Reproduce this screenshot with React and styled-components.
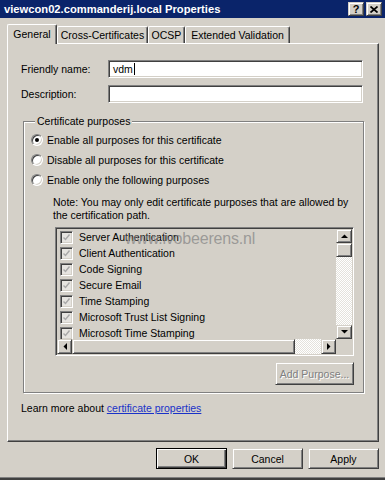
import React from 'react';
import styled, { createGlobalStyle } from 'styled-components';

const FACE = '#d4d0c8';

const GlobalStyle = createGlobalStyle`
  html, body { margin: 0; padding: 0; background: ${FACE}; }
  body {
    font-family: "Liberation Sans", Arial, sans-serif;
    font-size: 10.5px;
    color: #000;
  }
  #root { width: 385px; height: 480px; overflow: hidden; }
`;

const Window = styled.div`
  width: 385px;
  height: 480px;
  box-sizing: border-box;
  background: ${FACE};
  display: flex;
  flex-direction: column;
  border-bottom: 2px solid #404040;
  box-shadow: inset 0 -1px 0 #808080;
`;

const TitleBar = styled.div`
  height: 18px;
  flex: none;
  background: #0a246a;
  display: flex;
  align-items: center;
  padding: 0 3px 0 4px;
  color: #fff;
  font-weight: bold;
  font-size: 11.2px;
`;

const TitleText = styled.span`
  flex: 1;
  white-space: nowrap;
`;

const TitleButtons = styled.div`
  display: flex;
  gap: 2px;
`;

const raised = `
  border: 1px solid;
  border-color: ${FACE} #404040 #404040 ${FACE};
  box-shadow: inset 1px 1px 0 #fff, inset -1px -1px 0 #808080;
  background: ${FACE};
  box-sizing: border-box;
`;

const sunken = `
  border: 1px solid;
  border-color: #808080 #fff #fff #808080;
  box-shadow: inset 1px 1px 0 #404040, inset -1px -1px 0 ${FACE};
  box-sizing: border-box;
`;

const CaptionButton = styled.div`
  ${raised}
  width: 16px;
  height: 14px;
  display: flex;
  align-items: center;
  justify-content: center;
  color: #000;
  font-size: 11px;
  font-weight: bold;
  line-height: 1;
`;

const Body = styled.div`
  flex: 1;
  display: flex;
  flex-direction: column;
  padding: 6px 6px 0 7px;
  border-left: 1px solid #fff;
  margin-left: -1px;
`;

const TabRow = styled.div`
  display: flex;
  align-items: flex-end;
  height: 19px;
  position: relative;
  z-index: 1;
`;

const Tab = styled.div`
  width: ${p => p.$w}px;
  height: ${p => (p.$active ? 20 : 17)}px;
  margin-bottom: ${p => (p.$active ? -1 : 0)}px;
  box-sizing: border-box;
  background: ${FACE};
  border-top: 1px solid #fff;
  border-left: 1px solid #fff;
  border-right: 1px solid #404040;
  box-shadow: inset -1px 0 0 #808080;
  border-radius: 2px 2px 0 0;
  display: flex;
  align-items: center;
  justify-content: center;
  padding-bottom: ${p => (p.$active ? 2 : 0)}px;
  white-space: nowrap;
`;

const Panel = styled.div`
  flex: 1;
  box-sizing: border-box;
  border: 1px solid;
  border-color: #fff #404040 #404040 #fff;
  box-shadow: inset -1px -1px 0 #808080;
  padding: 16px 15px 0 13px;
  display: flex;
  flex-direction: column;
`;

const FieldRow = styled.div`
  display: grid;
  grid-template-columns: 87px 1fr;
  align-items: center;
  height: 18px;
  margin-bottom: 7px;
`;

const TextBox = styled.div`
  ${sunken}
  height: 18px;
  background: #fff;
  padding: 0 4px;
  display: flex;
  align-items: center;
`;

const Caret = styled.span`
  display: inline-block;
  width: 1px;
  height: 12px;
  background: #000;
  margin-left: 1px;
`;

const Group = styled.fieldset`
  margin: 5px -1px 0 2px;
  padding: 2px 9px 7px 7px;
  min-width: 0;
  border: 1px solid #808080;
  box-shadow: inset 1px 1px 0 #fff, 1px 1px 0 #fff;
  display: flex;
  flex-direction: column;
`;

const Legend = styled.legend`
  margin-left: 4px;
  padding: 0 2px;
  background: ${FACE};
  line-height: 13px;
`;

const RadioRow = styled.div`
  height: 20px;
  display: flex;
  align-items: center;
  gap: 4px;
`;

const RadioCircle = styled.span`
  width: 12px;
  height: 12px;
  box-sizing: border-box;
  border-radius: 50%;
  border: 1px solid;
  border-color: #808080 #fff #fff #808080;
  box-shadow: inset 1px 1px 0 #404040, inset -1px -1px 0 ${FACE};
  background: #fff;
  display: flex;
  align-items: center;
  justify-content: center;
  &::after {
    content: '';
    width: 4px;
    height: 4px;
    border-radius: 50%;
    background: ${p => (p.$checked ? '#000' : 'transparent')};
  }
`;

const Note = styled.div`
  margin: 6px 0 0 22px;
  line-height: 13px;
`;

const ListBox = styled.div`
  ${sunken}
  position: relative;
  margin: 5px 0 0 24px;
  height: 129px;
  padding: 1px;
  display: grid;
  grid-template-columns: 1fr 16px;
  grid-template-rows: 1fr 15px;
  background: ${FACE};
  overflow: hidden;
`;

const Items = styled.div`
  overflow: hidden;
`;

const Item = styled.div`
  height: 16px;
  display: flex;
  align-items: center;
  gap: 6px;
  padding-left: 3px;
  white-space: nowrap;
`;

const CheckBox = styled.span`
  ${sunken}
  width: 13px;
  height: 13px;
  background: #e6e4e0;
  display: flex;
  align-items: center;
  justify-content: center;
`;

const VScroll = styled.div`
  display: flex;
  flex-direction: column;
`;

const HScroll = styled.div`
  display: flex;
`;

const ScrollBtn = styled.div`
  ${raised}
  flex: none;
  width: ${p => p.$w || 16}px;
  height: ${p => p.$h || 15}px;
  display: flex;
  align-items: center;
  justify-content: center;
`;

const Thumb = styled.div`
  ${raised}
  flex: ${p => (p.$grow ? 1 : 'none')};
  height: ${p => (p.$h ? `${p.$h}px` : 'auto')};
`;

const Track = styled.div`
  flex: ${p => (p.$grow ? 1 : 'none')};
  width: ${p => (p.$w ? `${p.$w}px` : 'auto')};
  background: repeating-conic-gradient(#fff 0 25%, #e4e2dc 0 50%) 0 0 / 2px 2px;
`;

const Corner = styled.div`
  background: ${FACE};
`;

const Watermark = styled.div`
  position: absolute;
  left: 69px;
  top: 2px;
  font-size: 16px;
  color: rgba(135, 135, 135, 0.75);
  pointer-events: none;
  white-space: nowrap;
  letter-spacing: -0.2px;
`;

const AddButton = styled.div`
  ${raised}
  align-self: flex-end;
  margin-top: 6px;
  width: 79px;
  height: 23px;
  display: flex;
  align-items: center;
  justify-content: center;
  color: #808080;
  text-shadow: 1px 1px 0 #fff;
`;

const LearnMore = styled.div`
  margin: 9px 0 0 0;
  line-height: 13px;
`;

const Link = styled.span`
  color: #1a32c8;
  text-decoration: underline;
`;

const ButtonRow = styled.div`
  display: flex;
  justify-content: flex-end;
  gap: 5px;
  margin-top: 6px;
  padding: 0 0 9px 0;
`;

const DlgButton = styled.div`
  ${raised}
  width: 71px;
  height: 21px;
  display: flex;
  align-items: center;
  justify-content: center;
  ${p =>
    p.$default &&
    `
    border-color: #000;
    box-shadow: inset 1px 1px 0 #fff, inset -1px -1px 0 #404040, inset -2px -2px 0 #808080;
  `}
`;

const Arrow = ({ dir }) => {
  const pts = {
    up: '0,4 7,4 3.5,0.5',
    down: '0,0 7,0 3.5,3.5',
    left: '4,0 4,7 0.5,3.5',
    right: '0,0 0,7 3.5,3.5',
  }[dir];
  const horiz = dir === 'left' || dir === 'right';
  return (
    <svg width={horiz ? 4 : 7} height={horiz ? 7 : 4} viewBox={horiz ? '0 0 4 7' : '0 0 7 4'}>
      <polygon points={pts} fill="#000" />
    </svg>
  );
};

const Check = () => (
  <svg width="9" height="9" viewBox="0 0 9 9">
    <path d="M1.5 4.5 L3.5 6.5 L7.5 1.5" fill="none" stroke="#a8a8a8" strokeWidth="1.4" />
  </svg>
);

const purposes = [
  'Server Authentication',
  'Client Authentication',
  'Code Signing',
  'Secure Email',
  'Time Stamping',
  'Microsoft Trust List Signing',
  'Microsoft Time Stamping',
];

export default function App() {
  return (
    <>
      <GlobalStyle />
      <Window>
        <TitleBar>
          <TitleText>viewcon02.commanderij.local Properties</TitleText>
          <TitleButtons>
            <CaptionButton>?</CaptionButton>
            <CaptionButton>
              <svg width="8" height="7" viewBox="0 0 8 7">
                <path d="M0.5 0.5L7.5 6.5M7.5 0.5L0.5 6.5" stroke="#000" strokeWidth="1.7" />
              </svg>
            </CaptionButton>
          </TitleButtons>
        </TitleBar>
        <Body>
          <TabRow>
            <Tab $w={50} $active>General</Tab>
            <Tab $w={91}>Cross-Certificates</Tab>
            <Tab $w={37}>OCSP</Tab>
            <Tab $w={105}>Extended Validation</Tab>
          </TabRow>
          <Panel>
            <FieldRow>
              <span>Friendly name:</span>
              <TextBox>
                vdm<Caret />
              </TextBox>
            </FieldRow>
            <FieldRow>
              <span>Description:</span>
              <TextBox />
            </FieldRow>
            <Group>
              <Legend>Certificate purposes</Legend>
              <RadioRow>
                <RadioCircle $checked />
                <span>Enable all purposes for this certificate</span>
              </RadioRow>
              <RadioRow>
                <RadioCircle />
                <span>Disable all purposes for this certificate</span>
              </RadioRow>
              <RadioRow>
                <RadioCircle />
                <span>Enable only the following purposes</span>
              </RadioRow>
              <Note>
                Note: You may only edit certificate purposes that are allowed by
                <br />
                the certification path.
              </Note>
              <ListBox>
                <Items>
                  {purposes.map(p => (
                    <Item key={p}>
                      <CheckBox>
                        <Check />
                      </CheckBox>
                      <span>{p}</span>
                    </Item>
                  ))}
                </Items>
                <VScroll>
                  <ScrollBtn $w={16} $h={14}>
                    <Arrow dir="up" />
                  </ScrollBtn>
                  <Thumb $h={14} />
                  <Track $grow />
                  <ScrollBtn $w={16} $h={14}>
                    <Arrow dir="down" />
                  </ScrollBtn>
                </VScroll>
                <HScroll>
                  <ScrollBtn $w={15} $h={15}>
                    <Arrow dir="left" />
                  </ScrollBtn>
                  <Thumb $grow />
                  <Track $w={26} />
                  <ScrollBtn $w={15} $h={15}>
                    <Arrow dir="right" />
                  </ScrollBtn>
                </HScroll>
                <Corner />
                <Watermark>www.ivobeerens.nl</Watermark>
              </ListBox>
              <AddButton>Add Purpose...</AddButton>
            </Group>
            <LearnMore>
              Learn more about <Link>certificate properties</Link>
            </LearnMore>
          </Panel>
          <ButtonRow>
            <DlgButton $default>OK</DlgButton>
            <DlgButton>Cancel</DlgButton>
            <DlgButton>Apply</DlgButton>
          </ButtonRow>
        </Body>
      </Window>
    </>
  );
}
